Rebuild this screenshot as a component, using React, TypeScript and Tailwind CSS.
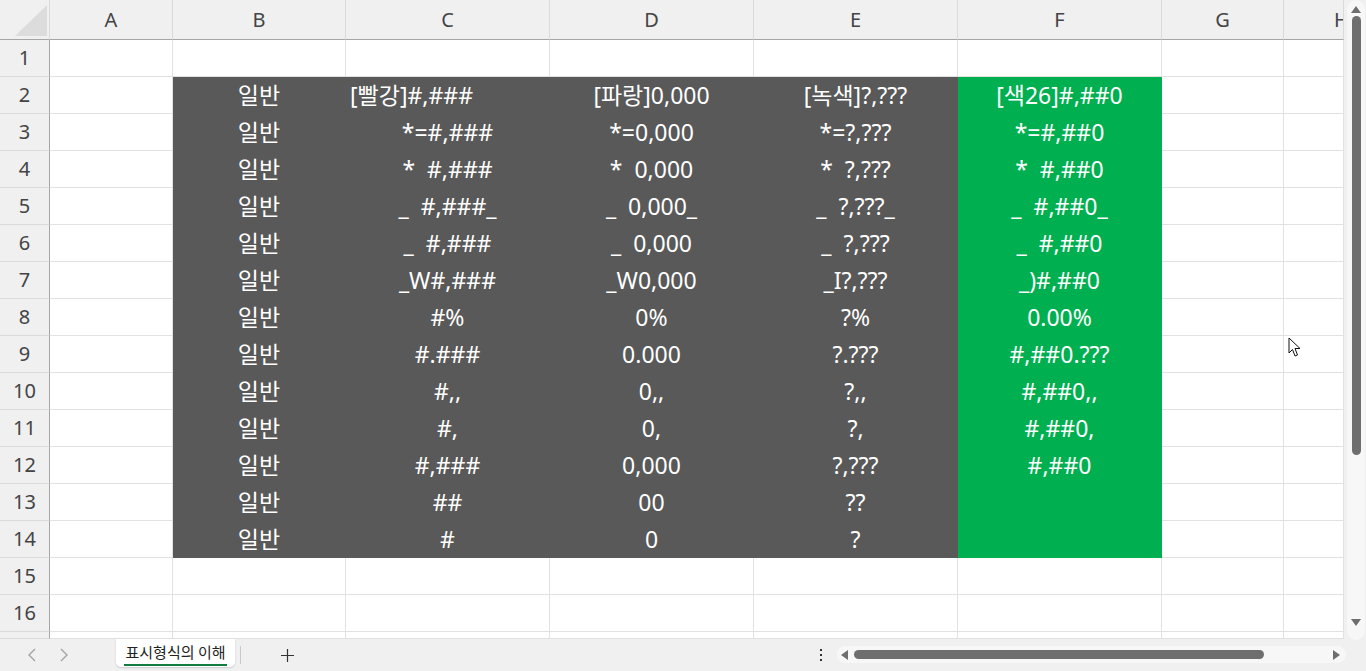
import React from 'react'

const cols = ['A', 'B', 'C', 'D', 'E', 'F', 'G', 'H']

// C, D, E, F values for rows 2..14
const data: string[][] = [
  ['[빨강]#,###', '[파랑]0,000', '[녹색]?,???', '[색26]#,##0'],
  ['*=#,###', '*=0,000', '*=?,???', '*=#,##0'],
  ['*  #,###', '*  0,000', '*  ?,???', '*  #,##0'],
  ['_  #,###_', '_  0,000_', '_  ?,???_', '_  #,##0_'],
  ['_  #,###', '_  0,000', '_  ?,???', '_  #,##0'],
  ['_W#,###', '_W0,000', '_I?,???', '_)#,##0'],
  ['#%', '0%', '?%', '0.00%'],
  ['#.###', '0.000', '?.???', '#,##0.???'],
  ['#,,', '0,,', '?,,', '#,##0,,'],
  ['#,', '0,', '?,', '#,##0,'],
  ['#,###', '0,000', '?,???', '#,##0'],
  ['##', '00', '??', ''],
  ['#', '0', '?', ''],
]

const gridCols = 'grid grid-cols-[50px_123px_173px_204px_204px_204px_204px_122px_60px]'

const Cell = ({ fill, children, left }: { fill?: 'dark' | 'green'; children?: React.ReactNode; left?: boolean }) => {
  const bg =
    fill === 'dark'
      ? 'bg-[#595959] border-[#595959] text-white'
      : fill === 'green'
        ? 'bg-[#00b050] border-[#00b050] text-white'
        : 'bg-white border-[#e1e1e1]'
  return (
    <div
      className={`h-[37px] border-b border-r flex items-center whitespace-pre text-[23px] ${left ? 'justify-start pl-[4px]' : 'justify-center'} ${bg}`}
    >
      {children}
    </div>
  )
}

const RowHead = ({ n }: { n: React.ReactNode }) => (
  <div className="h-[37px] bg-[#f0f0f0] border-b border-r border-b-[#dadada] border-r-[#a6a6a6] flex items-center justify-center text-[20px] text-[#444]">
    {n}
  </div>
)

export default function App() {
  const rows: React.ReactNode[] = []
  for (let r = 1; r <= 16; r++) {
    const d = r >= 2 && r <= 14 ? data[r - 2] : null
    rows.push(
      <div key={r} className={gridCols}>
        <RowHead n={r} />
        <Cell />
        <Cell fill={d ? 'dark' : undefined}>{d ? '일반' : ''}</Cell>
        <Cell fill={d ? 'dark' : undefined} left={r === 2}>{d?.[0]}</Cell>
        <Cell fill={d ? 'dark' : undefined}>{d?.[1]}</Cell>
        <Cell fill={d ? 'dark' : undefined}>{d?.[2]}</Cell>
        <Cell fill={d ? 'green' : undefined}>{d?.[3]}</Cell>
        <Cell />
        <Cell />
      </div>
    )
  }

  return (
    <div className="relative w-[1366px] h-[671px] overflow-hidden bg-[#f0f0f0] font-['Noto_Sans','Noto_Sans_CJK_KR',sans-serif] flex flex-col">
      <div className="flex h-[639px]">
        {/* sheet grid */}
        <div className="w-[1344px] flex flex-col bg-white">
          <div className={gridCols}>
            <div className="h-[40px] bg-[#f0f0f0] border-r border-b border-r-[#dadada] border-b-[#a6a6a6] relative">
              <svg className="absolute left-[15px] top-[5px]" width="32" height="31" viewBox="0 0 32 31">
                <polygon points="32,0 32,31 0,31" fill="#dcdcdc" />
              </svg>
            </div>
            {cols.map((c) => (
              <div
                key={c}
                className="h-[40px] bg-[#f0f0f0] border-r border-b border-r-[#dadada] border-b-[#a6a6a6] flex items-center justify-center text-[20px] text-[#444] overflow-hidden"
              >
                <span className={c === 'H' ? 'ml-[56px]' : ''}>{c}</span>
              </div>
            ))}
          </div>
          {rows}
          <div className={gridCols}>
            <div className="h-[7px] bg-[#f0f0f0] border-b border-r border-b-[#dadada] border-r-[#a6a6a6]" />
            {[0, 1, 2, 3, 4, 5, 6, 7].map((i) => (
              <div key={i} className="h-[7px] border-b border-r border-[#e1e1e1]" />
            ))}
          </div>
        </div>

        {/* vertical scrollbar */}
        <div className="w-[22px] bg-[#f0f0f0] pl-[3px] pt-0">
          <div className="h-[640px] w-[18px] rounded-[9px] bg-[#f7f7f7] flex flex-col items-center">
            <svg className="mt-[6px]" width="10" height="7" viewBox="0 0 10 7">
              <polygon points="5,0 10,7 0,7" fill="#6e6e6e" />
            </svg>
            <div className="mt-[3px] w-[9px] h-[439px] rounded-full bg-[#6e6e6e]" />
            <div className="flex-1" />
            <svg className="mb-[14px]" width="10" height="7" viewBox="0 0 10 7">
              <polygon points="0,0 10,0 5,7" fill="#6e6e6e" />
            </svg>
          </div>
        </div>
      </div>

      {/* sheet tabs bar */}
      <div className="h-[32px] flex items-start text-[#999]">
        <div className="w-[116px] h-[32px] flex items-center text-[#a0a0a0]">
          <svg className="ml-[28px]" width="8" height="14" viewBox="0 0 8 14" fill="none" stroke="currentColor" strokeWidth="1.3">
            <path d="M7 1 L1 7 L7 13" />
          </svg>
          <svg className="ml-[24px]" width="8" height="14" viewBox="0 0 8 14" fill="none" stroke="currentColor" strokeWidth="1.3">
            <path d="M1 1 L7 7 L1 13" />
          </svg>
        </div>
        <div className="w-[119px] h-[28px] bg-white rounded-b-[5px] shadow-[0_1px_2px_rgba(0,0,0,0.15)] flex flex-col items-center pt-[3px]">
          <span className="text-[15px] leading-[20px] text-[#222] font-['Noto_Sans_CJK_KR',sans-serif]">표시형식의 이해</span>
          <div className="mt-[2px] w-[103px] h-[2px] bg-[#107c41]" />
        </div>
        <div className="ml-[5px] mt-[7px] w-px h-[18px] bg-[#c8c8c8]" />
        <div className="ml-[40px] h-[32px] flex items-center text-[#333]">
          <svg width="13" height="13" viewBox="0 0 13 13" stroke="currentColor" strokeWidth="1.2">
            <path d="M6.5 0 V13 M0 6.5 H13" />
          </svg>
        </div>
        <div className="ml-[525px] h-[32px] flex items-center">
          <svg width="4" height="13" viewBox="0 0 4 13" fill="#333">
            <rect x="1" y="0" width="2" height="2" />
            <rect x="1" y="5" width="2" height="2" />
            <rect x="1" y="10" width="2" height="2" />
          </svg>
        </div>
        <div className="ml-[14px] mt-[7px] w-[509px] h-[17px] rounded-[9px] bg-[#f7f7f7] flex items-center">
          <svg className="ml-[4px]" width="7" height="10" viewBox="0 0 7 10">
            <polygon points="7,0 7,10 0,5" fill="#6e6e6e" />
          </svg>
          <div className="ml-[6px] w-[410px] h-[9px] rounded-full bg-[#6e6e6e]" />
          <div className="flex-1" />
          <svg className="mr-[6px]" width="7" height="10" viewBox="0 0 7 10">
            <polygon points="0,0 7,5 0,10" fill="#6e6e6e" />
          </svg>
        </div>
      </div>

      {/* mouse pointer */}
      <svg className="absolute left-[1288px] top-[337px]" width="14" height="21" viewBox="0 0 14 21">
        <path d="M1 1 L1 16 L4.5 12.5 L7 19 L9.5 18 L7 11.5 L12 11.5 Z" fill="white" stroke="#111" strokeWidth="1" strokeLinejoin="round" />
      </svg>
    </div>
  )
}
